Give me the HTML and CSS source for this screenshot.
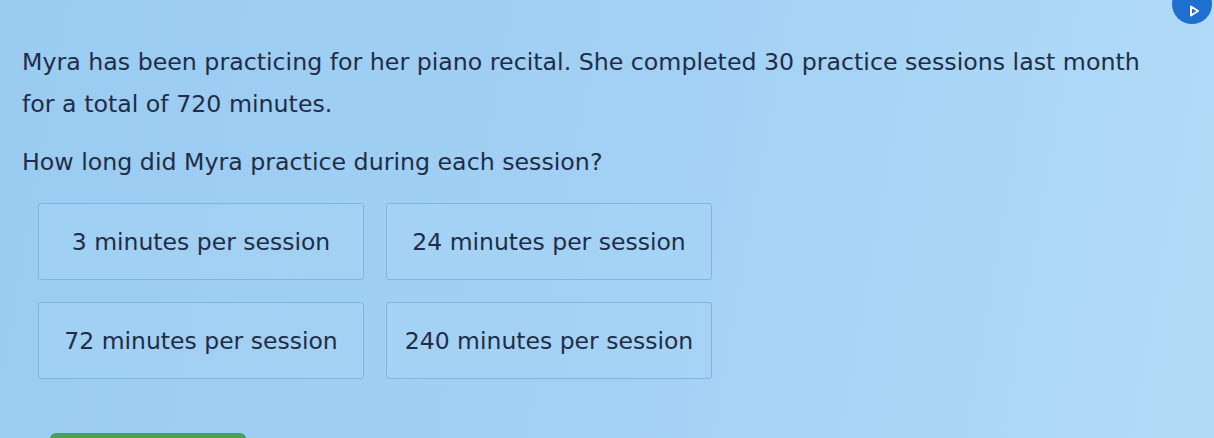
FILE: index.html
```html
<!DOCTYPE html>
<html lang="en">
<head>
  <meta charset="UTF-8" />
  <title>Practice Sessions</title>
  <link rel="stylesheet" href="styles.css">
</head>
<body>

<button class="play" aria-label="Read aloud">
  <svg width="14" height="14" viewBox="0 0 14 14">
    <path d="M4 2.5 L11 7 L4 11.5 Z" fill="none" stroke="#fff" stroke-width="2" stroke-linejoin="round"/>
  </svg>
</button>

<div class="question">
  <p class="prompt">Myra has been practicing for her piano recital. She completed 30 practice sessions last month for a total of 720 minutes.</p>
  <p class="ask">How long did Myra practice during each session?</p>

  <div class="choices">
    <div class="choice">3 minutes per session</div>
    <div class="choice">24 minutes per session</div>
    <div class="choice">72 minutes per session</div>
    <div class="choice">240 minutes per session</div>
  </div>
</div>

<div class="submit-bar"></div>

</body>
</html>
```

FILE: styles.css
```css
* { box-sizing: border-box; }
html, body { height: 100%; }
body {
  margin: 0;
  font-family: "DejaVu Sans", Verdana, sans-serif;
  color: #1f2d48;
  background: linear-gradient(100deg, #9acbf1 0%, #a3d1f5 55%, #b2dbf7 100%);
  overflow: hidden;
  position: relative;
}
.question {
  padding: 41px 0 0 22px;
}
.prompt, .ask {
  margin: 0;
  font-size: 23.7px;
  line-height: 42px;
  max-width: 1150px;
}
.ask {
  margin-top: 16px;
}
.choices {
  display: grid;
  grid-template-columns: 326px 326px;
  gap: 22px 22px;
  margin: 20px 0 0 16px;
}
.choice {
  height: 77px;
  display: flex;
  align-items: center;
  justify-content: center;
  font-size: 23.5px;
  border: 1.5px solid #7fb6dc;
  border-radius: 3px;
  background: rgba(170, 214, 246, 0.35);
}
.play {
  position: absolute;
  top: -16px;
  right: 2px;
  width: 40px;
  height: 40px;
  border: none;
  border-radius: 50%;
  background: #1f6fd0;
  display: flex;
  align-items: flex-end;
  justify-content: center;
  padding: 0 0 6px 3px;
}
.submit-bar {
  position: absolute;
  left: 50px;
  bottom: -6px;
  width: 196px;
  height: 11px;
  border-radius: 6px 6px 0 0;
  background: #4aa05a;
}
```
